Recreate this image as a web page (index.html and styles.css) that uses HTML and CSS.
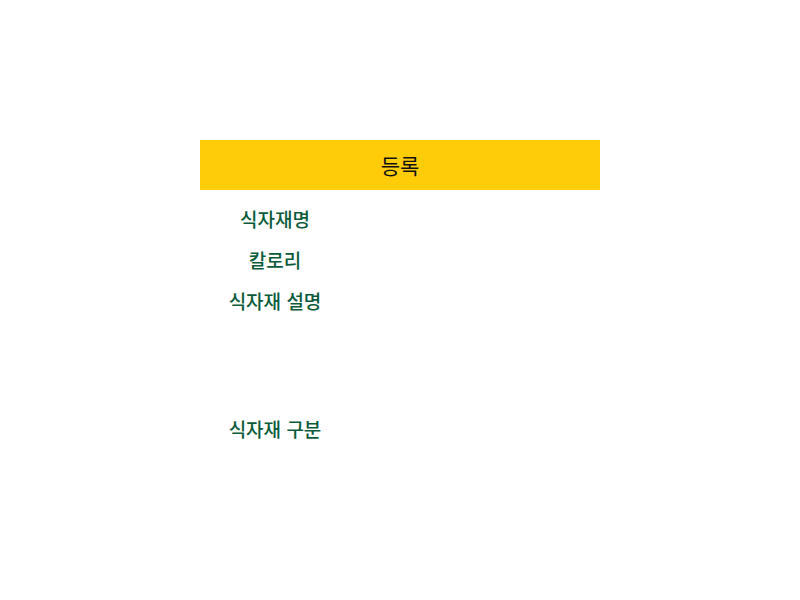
FILE: index.html
```html
<!DOCTYPE html>
<html lang="ko">
<head>
<meta charset="utf-8">
<link rel="stylesheet" href="styles.css">
</head>
<body>
<div class="form">
  <div class="header">등록</div>
  <div class="rows">
    <div class="row"><div class="label">식자재명</div><div class="field"></div></div>
    <div class="row"><div class="label">칼로리</div><div class="field"></div></div>
    <div class="row tall"><div class="label">식자재 설명</div><div class="field"></div></div>
    <div class="row"><div class="label">식자재 구분</div><div class="field"></div></div>
  </div>
</div>
</body>
</html>
```
FILE: styles.css
```css
html, body {
  margin: 0;
  padding: 0;
  background: #ffffff;
}
body {
  font-family: "Noto Sans CJK KR", "Noto Sans", sans-serif;
}
.form {
  width: 400px;
  margin: 140px auto 0;
}
.header {
  height: 50px;
  background: #ffcc0a;
  color: #111;
  font-size: 21px;
  font-weight: 400;
  display: flex;
  align-items: center;
  justify-content: center;
}
.rows {
  padding-top: 8px;
}
.row {
  display: flex;
  height: 41px;
}
.row.tall {
  height: 128px;
}
.label {
  width: 150px;
  height: 41px;
  line-height: 41px;
  text-align: center;
  color: #0b5b3b;
  font-size: 19px;
  font-weight: 500;
}
.field {
  flex: 1;
}
```
